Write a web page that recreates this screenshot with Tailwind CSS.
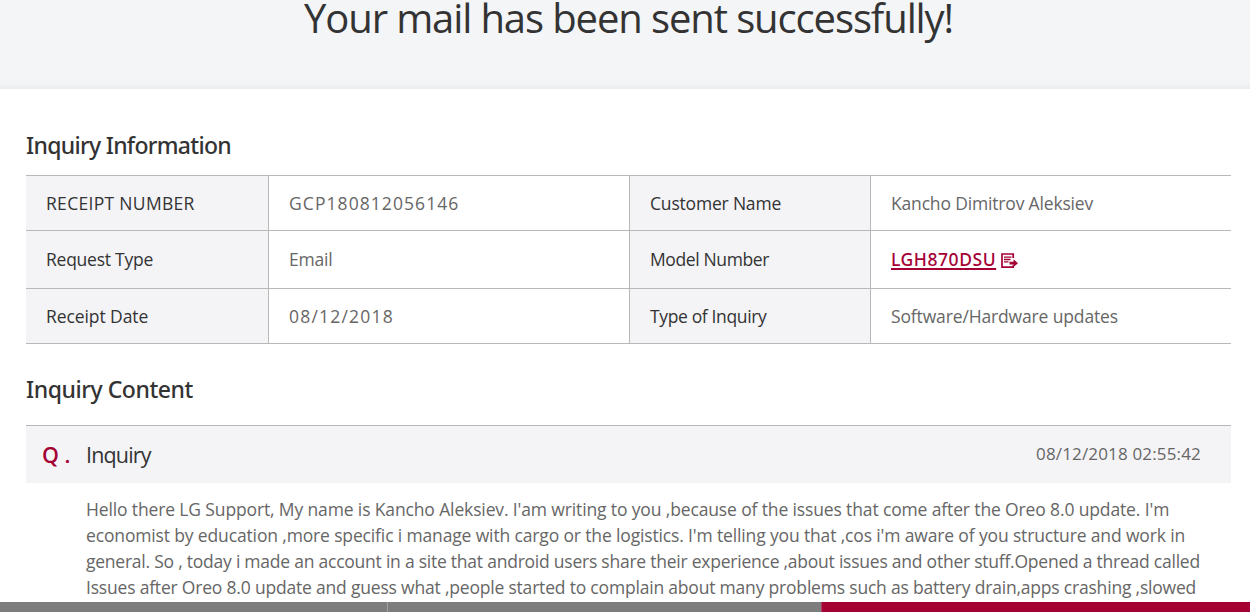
<!DOCTYPE html>
<html lang="en">
<head>
    <meta charset="UTF-8">
    <title>Your mail has been sent successfully!</title>
    <meta name="viewport" content="width=device-width, initial-scale=1.0">
    <script src="https://cdn.jsdelivr.net/npm/@tailwindcss/browser@4"></script>
</head>
<body class="h-[612px] overflow-hidden bg-white font-['Open_Sans',sans-serif] text-[#333] whitespace-nowrap">

<header class="h-[89px] bg-[#f4f5f7] shadow-[inset_0_-7px_8px_-6px_rgba(0,0,0,0.07)] pl-[304px]">
    <h1 class="text-[40px] leading-[36px] tracking-[-1.11px]">Your mail has been sent successfully!</h1>
</header>

<main class="pl-[26px] w-[1231px]">
    <h2 class="pt-[38px] h-[86px] font-['Noto_Sans',sans-serif] text-[23px] leading-9 tracking-[-0.7px] font-medium">Inquiry Information</h2>

    <!-- Inquiry details -->
    <dl class="grid grid-cols-[242px_361px_241px_361px] grid-rows-[55px_58px_55px] h-[169px] border-t border-[#b8b8b8] text-[17.5px] text-[#666] *:flex *:items-center *:pl-5 *:border-b *:border-[#b8b8b8]">
        <dt class="bg-[#f4f4f7] text-[#333] tracking-[0.31px]">RECEIPT NUMBER</dt>
        <dd class="border-l tracking-[1.07px]">GCP180812056146</dd>
        <dt class="border-l bg-[#f4f4f7] text-[#333] tracking-[-0.19px]">Customer Name</dt>
        <dd class="border-l tracking-[-0.17px]">Kancho Dimitrov Aleksiev</dd>

        <dt class="bg-[#f4f4f7] text-[#333] tracking-[-0.25px]">Request Type</dt>
        <dd class="border-l tracking-[-0.2px]">Email</dd>
        <dt class="border-l bg-[#f4f4f7] text-[#333] tracking-[-0.38px]">Model Number</dt>
        <dd class="border-l text-[#a50034]">
            <a href="#" class="font-['Noto_Sans',sans-serif] font-medium tracking-[0.55px] underline decoration-2 underline-offset-2">LGH870DSU</a>
            <svg class="ml-[5px] mt-[2px]" width="17" height="16" viewBox="0 0 17 16" fill="none" stroke="#a50034">
                <path d="M12.2 5V1H1v13.2h11.2v-2" stroke-width="1.7"/>
                <path d="M3 4.2h7.5M3 6.5h6.5M3 8.8h4.5" stroke-width="1.3"/>
                <path d="M8.5 8.8h4V6.3l4.5 3.9-4.5 3.9v-2.6h-4z" fill="#a50034" stroke="none"/>
            </svg>
        </dd>

        <dt class="bg-[#f4f4f7] text-[#333] tracking-[-0.08px]">Receipt Date</dt>
        <dd class="border-l tracking-[1.2px]">08/12/2018</dd>
        <dt class="border-l bg-[#f4f4f7] text-[#333] tracking-[-0.36px]">Type of Inquiry</dt>
        <dd class="border-l tracking-[-0.14px]">Software/Hardware updates</dd>
    </dl>

    <h2 class="pt-[27px] h-[81px] font-['Noto_Sans',sans-serif] text-[23px] leading-9 tracking-[-0.45px] font-medium">Inquiry Content</h2>

    <!-- Question -->
    <div class="flex items-center h-[58px] border-t border-[#b8b8b8] bg-[#f4f4f7] pl-4 pr-[30px]">
        <span class="w-11 pt-px text-[21.5px] font-semibold text-[#a50034]">Q .</span>
        <span class="pt-[2px] text-[21.5px] tracking-[-0.85px]">Inquiry</span>
        <span class="ml-auto pb-[2px] text-[17px] text-[#666] tracking-[0.16px]">08/12/2018 02:55:42</span>
    </div>
    <div class="pt-[13px] pl-[60px] text-[17.5px] leading-[26px] text-[#666]">
        <p class="tracking-[-0.135px]">Hello there LG Support, My name is Kancho Aleksiev. I'am writing to you ,because of the issues that come after the Oreo 8.0 update. I'm</p>
        <p class="tracking-[-0.145px]">economist by education ,more specific i manage with cargo or the logistics. I'm telling you that ,cos i'm aware of you structure and work in</p>
        <p class="tracking-[-0.235px]">general. So , today i made an account in a site that android users share their experience ,about issues and other stuff.Opened a thread called</p>
        <p class="tracking-[-0.195px]">Issues after Oreo 8.0 update and guess what ,people started to complain about many problems such as battery drain,apps crashing ,slowed</p>
    </div>
</main>

<!-- Bottom bar -->
<div class="fixed inset-x-0 bottom-0 flex h-[10px]">
    <div class="w-[388px] border-r border-[#a0a0a0] bg-[#7d7d7d]"></div>
    <div class="w-[434px] border-r border-[#b23a60] bg-[#7d7d7d]"></div>
    <div class="flex-1 bg-[#a50034]"></div>
</div>

</body>
</html>
